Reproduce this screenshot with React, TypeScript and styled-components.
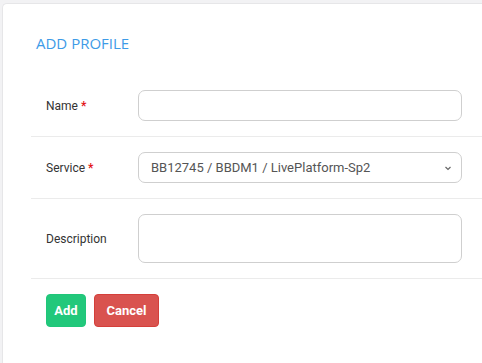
import React from "react";
import styled, { createGlobalStyle } from "styled-components";

const Global = createGlobalStyle`
  html, body { margin: 0; padding: 0; background: #f2f2f4; overflow: hidden; }
  body { font-family: Roboto, "Liberation Sans", sans-serif; }
  * { box-sizing: border-box; }
`;

const Page = styled.div`
  padding: 3px 0 0 2px;
  width: 482px;
  height: 363px;
  overflow: hidden;
`;

const Card = styled.div`
  background: #fff;
  border: 1px solid #e6e6e8;
  border-right: none;
  border-radius: 5px 0 0 0;
  height: 400px;
  padding: 0 20px 0 28px;
`;

const Title = styled.h2`
  margin: 0;
  padding: 29px 0 0 5px;
  height: 71px;
  font-family: "Open Sans", sans-serif;
  font-weight: 400;
  font-size: 15px;
  line-height: 20px;
  color: #3d9be7;
`;

const Row = styled.div`
  display: flex;
  align-items: center;
  padding: 15px 20px 15px 15px;
  border-bottom: 1px solid #ebebeb;
  margin-right: -20px;
`;

const Label = styled.label`
  width: 92px;
  flex: none;
  font-size: 12px;
  color: #333;
`;

const Req = styled.span`
  color: #e3161b;
  margin-left: 3px;
  font-weight: 700;
`;

const fieldBase = `
  flex: 1;
  border: 1px solid #cfcfcf;
  border-radius: 7px;
  background: #fff;
  font-family: Roboto, "Liberation Sans", sans-serif;
  font-size: 13px;
  color: #555;
  outline: none;
`;

const Input = styled.input`
  ${fieldBase}
  height: 31px;
  padding: 0 12px;
`;

const SelectWrap = styled.div`
  ${fieldBase}
  position: relative;
  height: 31px;
  display: flex;
  align-items: center;
  padding: 0 12px;
`;

const Chevron = styled.svg`
  position: absolute;
  right: 9px;
  top: 13px;
`;

const TextArea = styled.textarea`
  ${fieldBase}
  height: 49px;
  padding: 6px 12px;
  resize: none;
`;

const Actions = styled.div`
  display: flex;
  gap: 8px;
  padding: 15px 0 0 15px;
`;

const Button = styled.button<{ $variant: "add" | "cancel" }>`
  height: 33px;
  padding: 0;
  border-radius: 4px;
  border: 1px solid ${(p) => (p.$variant === "add" ? "#20c67a" : "#d43f3a")};
  background: ${(p) => (p.$variant === "add" ? "#22c87b" : "#d9534f")};
  color: #fff;
  font-family: Roboto, "Liberation Sans", sans-serif;
  font-weight: 700;
  font-size: 13px;
  width: ${(p) => (p.$variant === "add" ? "40px" : "65px")};
`;

export default function App() {
  return (
    <Page>
      <Global />
      <Card>
        <Title>ADD PROFILE</Title>
        <Row>
          <Label>
            Name<Req>*</Req>
          </Label>
          <Input />
        </Row>
        <Row>
          <Label>
            Service<Req>*</Req>
          </Label>
          <SelectWrap>
            BB12745 / BBDM1 / LivePlatform-Sp2
            <Chevron width="8" height="5" viewBox="0 0 8 5">
              <path d="M1.5 1 L4 3.5 L6.5 1" fill="none" stroke="#666" strokeWidth="1.2" />
            </Chevron>
          </SelectWrap>
        </Row>
        <Row>
          <Label>Description</Label>
          <TextArea />
        </Row>
        <Actions>
          <Button $variant="add">Add</Button>
          <Button $variant="cancel">Cancel</Button>
        </Actions>
      </Card>
    </Page>
  );
}
